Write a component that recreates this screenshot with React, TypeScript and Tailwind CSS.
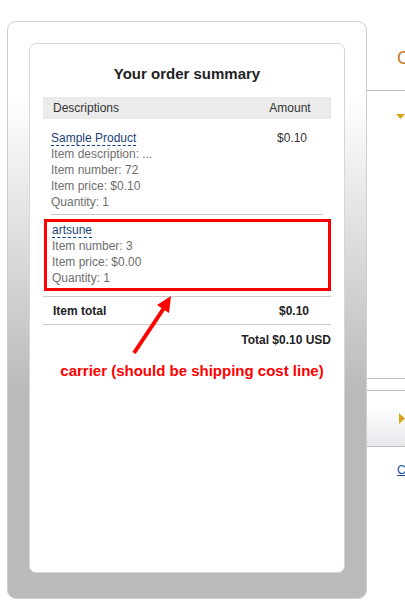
const font = { fontFamily: '"Liberation Sans", Arial, sans-serif' };

const ItemLine = ({ children }: { children: React.ReactNode }) => (
  <div className="h-[16px] leading-[16px] text-[#6e6e6e]">{children}</div>
);

const ProductName = ({ children }: { children: React.ReactNode }) => (
  <div className="h-[16px] leading-[16px]">
    <span className="border-b border-dashed border-[#0b3d91] text-[#1d3f7a] leading-[14px] inline-block">
      {children}
    </span>
  </div>
);

const OrderSummary = () => (
  <div className="relative h-[530px] rounded-[7px] border border-[#d6d6d6] bg-white px-[13px] pt-[20px]">
    <h2 className="h-[20px] text-center text-[15px] font-bold leading-[20px] text-[#222]">
      Your order summary
    </h2>

    <div className="mt-[13px] flex h-[22px] items-center bg-[#ebebeb] text-[12px] text-[#333]">
      <span className="flex-1 pl-[10px]">Descriptions</span>
      <span className="mr-[11px] w-[60px] text-center">Amount</span>
    </div>

    {/* first product */}
    <div className="mx-[8px] mt-[11px] flex border-b border-[#cccccc] pb-[4px] text-[12px]">
      <div className="flex-1">
        <ProductName>Sample Product</ProductName>
        <ItemLine>Item description: ...</ItemLine>
        <ItemLine>Item number: 72</ItemLine>
        <ItemLine>Item price: $0.10</ItemLine>
        <ItemLine>Quantity: 1</ItemLine>
      </div>
      <div className="mr-[1px] w-[60px] text-center leading-[16px] text-[#333]">$0.10</div>
    </div>

    {/* carrier row, highlighted */}
    <div className="mt-[4px] ml-[1px] border-[3px] border-[#ff0000] pb-[2px] pl-[5px] pt-0 text-[12px]">
      <ProductName>artsune</ProductName>
      <ItemLine>Item number: 3</ItemLine>
      <ItemLine>Item price: $0.00</ItemLine>
      <ItemLine>Quantity: 1</ItemLine>
    </div>

    <div className="mt-[5px] flex h-[29px] items-center border-y border-[#cccccc] text-[12px] font-bold text-[#222]">
      <span className="flex-1 pl-[10px]">Item total</span>
      <span className="mr-[7px] w-[60px] text-center">$0.10</span>
    </div>

    <div className="mt-[7px] text-right text-[12px] font-bold leading-[16px] text-[#222]">
      Total $0.10 USD
    </div>

    <p className="mt-[14px] pl-[10px] text-center text-[15px] font-bold leading-[18px] text-[#ff0000]">
      carrier (should be shipping cost line)
    </p>

    <svg
      className="pointer-events-none absolute left-[95px] top-[248px]"
      width="60"
      height="70"
      viewBox="0 0 60 70"
    >
      <line x1="9" y1="61" x2="39" y2="16" stroke="#ff0000" strokeWidth="4" />
      <polygon points="46,4 44,21 32,13" fill="#ff0000" />
    </svg>
  </div>
);

const RightColumn = () => (
  <div className="flex-1 overflow-hidden whitespace-nowrap">
    <div className="h-[91px] border-b border-[#bbbbbb] pl-[30px] pt-[47px] text-[18px] leading-[22px] text-[#c8782a]">
      Choose a way to pay
    </div>
    <div className="pl-[29px] pt-[23px]">
      <svg width="9" height="6" viewBox="0 0 9 6">
        <polygon points="0,0 9,0 4.5,5" fill="#d6a51a" />
      </svg>
    </div>
    <div className="mt-[258px] h-[12px] border-t border-[#c4c4c4]" />
    <div className="flex h-[57px] items-center border-y border-[#bdbdbd] bg-gradient-to-b from-white from-30% to-[#e6e8eb] pl-[32px]">
      <svg width="6" height="11" viewBox="0 0 6 11">
        <polygon points="0,0 6,5.5 0,11" fill="#d6a51a" />
      </svg>
    </div>
    <div className="pl-[30px] pt-[14px] text-[12px]">
      <a className="text-[#1d4f9c] underline">Cancel and return to merchant</a>
    </div>
  </div>
);

export default function App() {
  return (
    <div className="flex h-[611px] w-[405px] bg-white" style={font}>
      <div className="ml-[7px] mt-[21px] h-[578px] w-[360px] shrink-0 rounded-[9px] border border-[#cfcfcf] bg-[linear-gradient(to_bottom,#ffffff_13%,#bababa_64%)] px-[21px] pt-[21px]">
        <OrderSummary />
      </div>
      <RightColumn />
    </div>
  );
}
